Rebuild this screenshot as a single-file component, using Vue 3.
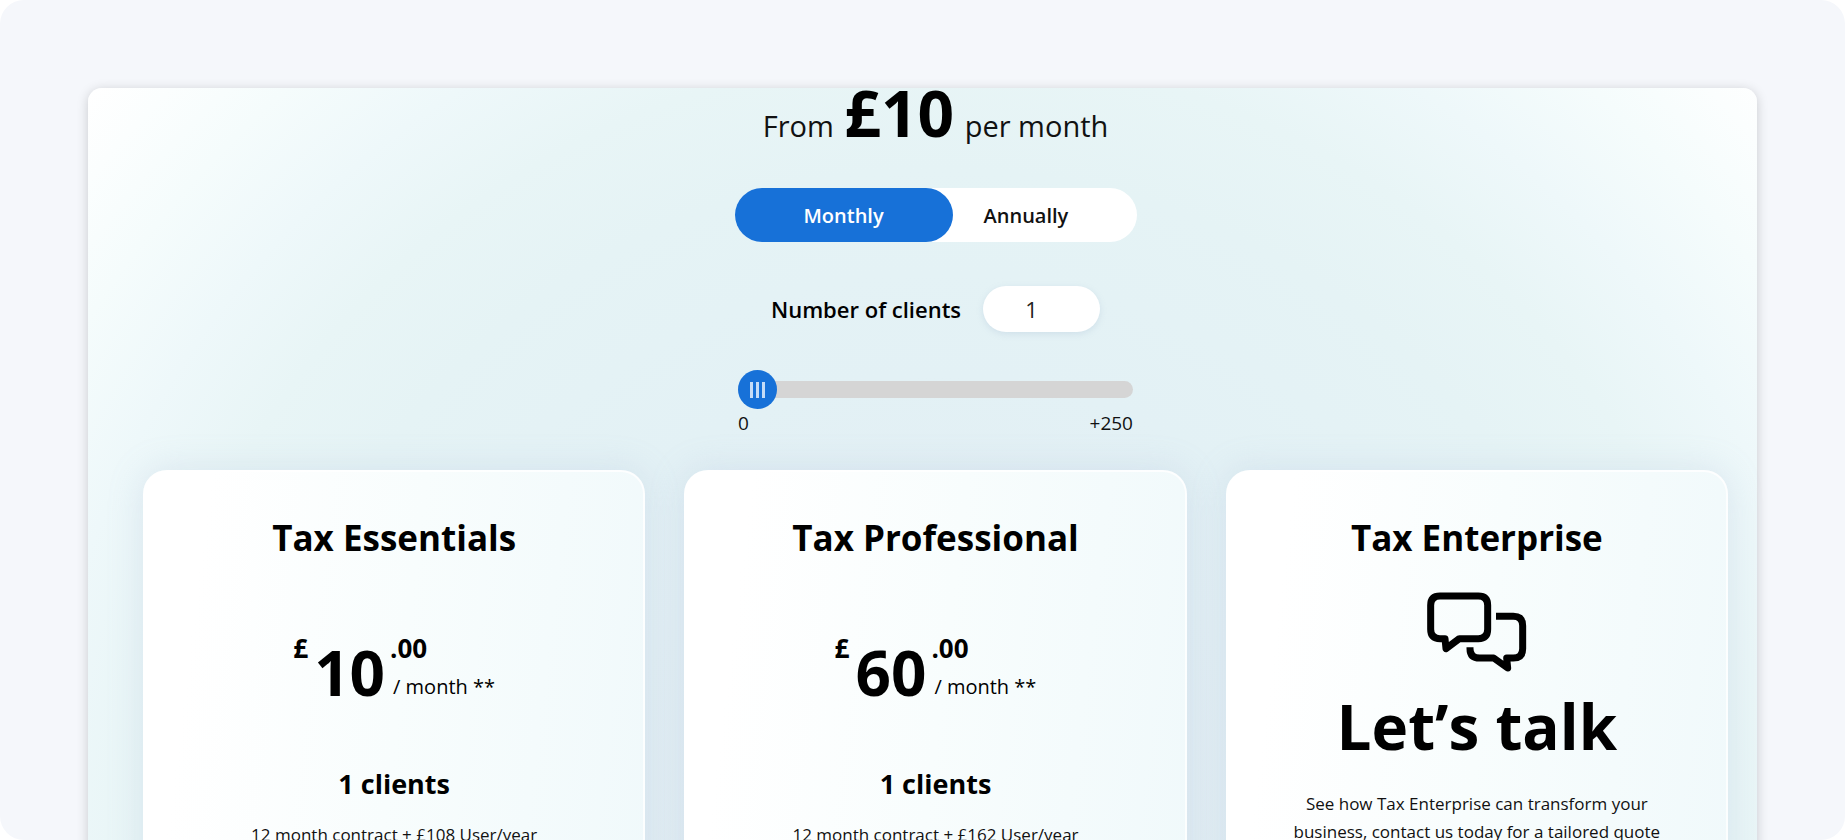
<script setup>
import { ref } from 'vue'

const billing = ref('monthly')
const clients = ref(1)
const plans = [
  { name: 'Tax Essentials', price: '10', contract: '12 month contract + £108 User/year' },
  { name: 'Tax Professional', price: '60', contract: '12 month contract + £162 User/year' },
]
</script>

<template>
  <div class="page">
    <main class="frame">
      <section class="hero">
        <p class="from">From <strong>£10</strong> per month</p>

        <div class="toggle" role="group" aria-label="Billing period">
          <button type="button" :class="['option', { active: billing === 'monthly' }]" @click="billing = 'monthly'">Monthly</button>
          <button type="button" :class="['option', { active: billing === 'annually' }]" @click="billing = 'annually'">Annually</button>
        </div>

        <div class="clients">
          <label for="clients">Number of clients</label>
          <input id="clients" v-model="clients" class="count" type="text" inputmode="numeric" />
        </div>

        <div class="slider">
          <input v-model="clients" class="range" type="range" min="1" max="250" aria-label="Number of clients" />
          <div class="scale"><span>0</span><span>+250</span></div>
        </div>
      </section>

      <section class="cards">
        <article v-for="plan in plans" :key="plan.name" class="card">
          <h2>{{ plan.name }}</h2>
          <div class="price">
            <span class="small">£</span>
            <span class="amount">{{ plan.price }}</span>
            <span class="rest">
              <span class="small">.00</span>
              <span class="period">/ month **</span>
            </span>
          </div>
          <h3>{{ clients }} clients</h3>
          <p class="contract">{{ plan.contract }}</p>
        </article>

        <article class="card">
          <h2>Tax Enterprise</h2>
          <svg class="chat" viewBox="84 62 300 240" fill="none" stroke="#000" stroke-width="21" stroke-linejoin="round" aria-hidden="true">
            <path d="M123 74H238Q266 74 266 102V174Q266 202 238 202H181L141 232L138 202H123Q95 202 95 174V102Q95 74 123 74Z" />
            <path d="M291 135H343Q371 135 371 163V232Q371 260 343 260H323L326 290L284 260H242Q213 260 213 232V228" />
          </svg>
          <p class="talk">Let’s talk</p>
          <p class="pitch">See how Tax Enterprise can transform your business, contact us today for a tailored quote</p>
        </article>
      </section>
    </main>
  </div>
</template>

<style>
body {
  background: #fff;
}
</style>

<style scoped>
.page {
  box-sizing: border-box;
  height: 100vh;
  overflow: hidden;
  padding: 88px 88px 0;
  border-radius: 24px;
  background: #f5f7fb;
  color: #000;
  font-family: "Open Sans", "Noto Sans", sans-serif;
}

p,
h2,
h3 {
  margin: 0;
}

.frame {
  box-sizing: border-box;
  min-height: 100%;
  padding: 0 29px 60px 55px;
  border-radius: 14px 14px 0 0;
  background: radial-gradient(circle 1143px at 51% 767px, #e1edf3 20%, #e3f1f5 42%, #e5f3f5 60%, #e8f5f6 70%, #eef8fa 79%, #f5fcfc 88%, #fbfefe 95%, #fff 100%);
  box-shadow: 0 2px 12px rgba(0, 0, 0, 0.18);
}

.hero {
  display: flex;
  flex-direction: column;
  align-items: center;
}

.from {
  height: 100px;
  color: #111;
  font-size: 29px;
  line-height: 50px;
  white-space: nowrap;
}

.from strong {
  margin: 0 3px;
  color: #000;
  font-size: 64px;
}

.toggle {
  display: flex;
  width: 402px;
  height: 54px;
  border-radius: 27px;
  background: #fff;
}

.option {
  flex: 1;
  padding: 0 31px;
  border: 0;
  border-radius: 27px;
  background: none;
  color: #111;
  font: 600 20px "Open Sans", "Noto Sans", sans-serif;
  text-align: left;
}

.option.active {
  flex: 0 0 218px;
  background: #1771d8;
  color: #fff;
  text-align: center;
}

.clients {
  display: flex;
  align-items: center;
  gap: 22px;
  margin-top: 44px;
  font-size: 22px;
  font-weight: 600;
}

.count {
  box-sizing: border-box;
  width: 117px;
  height: 46px;
  padding: 0 20px 0 0;
  border: 0;
  border-radius: 23px;
  background: #fff;
  box-shadow: 0 2px 6px rgba(150, 175, 205, 0.25);
  color: #222;
  font: 22px "Open Sans", "Noto Sans", sans-serif;
  text-align: center;
}

.slider {
  width: 395px;
  margin-top: 38px;
}

.range {
  display: block;
  width: 100%;
  height: 39px;
  margin: 0;
  appearance: none;
  background: none;
}

.range::-webkit-slider-runnable-track {
  height: 17px;
  border-radius: 9px;
  background: #d5d5d5;
}

.range::-webkit-slider-thumb {
  width: 39px;
  height: 39px;
  margin-top: -11px;
  appearance: none;
  border-radius: 50%;
  background:
    linear-gradient(#c5dcf7, #c5dcf7) 12px 12px / 3px 16px no-repeat,
    linear-gradient(#c5dcf7, #c5dcf7) 18px 12px / 3px 16px no-repeat,
    linear-gradient(#c5dcf7, #c5dcf7) 24px 12px / 3px 16px no-repeat,
    #1771d8;
}

.scale {
  display: flex;
  justify-content: space-between;
  color: #111;
  font-size: 19px;
  line-height: 28px;
}

.cards {
  display: grid;
  grid-template-columns: repeat(3, 1fr);
  gap: 39px;
  margin-top: 33px;
}

.card {
  display: flex;
  flex-direction: column;
  align-items: center;
  min-height: 480px;
  padding-top: 43px;
  border: 2px solid rgba(255, 255, 255, 0.8);
  border-radius: 24px;
  background: linear-gradient(97deg, #fff 12%, #f8fdfd 50%, #f0f9fb 100%) border-box;
  box-shadow: 0 0 34px rgba(165, 185, 215, 0.25);
  text-align: center;
}

h2 {
  font-size: 35px;
  font-weight: 700;
  line-height: 46px;
}

.price {
  display: flex;
  align-items: flex-start;
  margin-top: 70px;
}

.small {
  font-size: 26px;
  font-weight: 700;
  line-height: 34px;
}

.amount {
  margin: 4px 5px 0 6px;
  font-size: 62px;
  font-weight: 700;
  line-height: 74px;
}

.rest {
  display: flex;
  flex-direction: column;
  align-items: flex-start;
}

.period {
  margin: 7px 0 0 3px;
  font-size: 20px;
  line-height: 30px;
}

h3 {
  margin-top: 58px;
  font-size: 27px;
  font-weight: 700;
  line-height: 34px;
}

.contract,
.pitch {
  color: #111;
  font-size: 17px;
  line-height: 28px;
}

.contract {
  margin-top: 20px;
}

.chat {
  width: 100px;
  height: 80px;
  margin-top: 31px;
}

.talk {
  margin-top: 14px;
  font-size: 62px;
  font-weight: 700;
  line-height: 80px;
}

.pitch {
  max-width: 380px;
  margin-top: 24px;
}
</style>
